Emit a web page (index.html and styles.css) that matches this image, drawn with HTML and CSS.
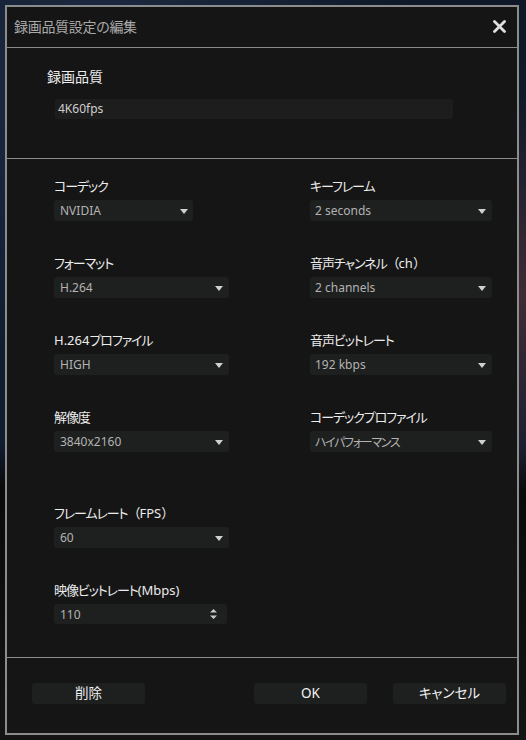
FILE: index.html
```html
<!DOCTYPE html>
<html lang="ja">
<head>
<meta charset="utf-8">
<title>録画品質設定の編集</title>
<link rel="stylesheet" href="styles.css">
</head>
<body>
<div class="dialog">
  <div class="titlebar">
    <span class="title">録画品質設定の編集</span>
    <svg class="close" width="13" height="13" viewBox="0 0 13 13"><path d="M1.5 1.5 L11.5 11.5 M11.5 1.5 L1.5 11.5" stroke="#e0e0e0" stroke-width="2.8" stroke-linecap="round"/></svg>
  </div>
  <div class="section-name">
    <div class="label big">録画品質</div>
    <div class="textbox">4K60fps</div>
  </div>
  <div class="section-grid">
    <div class="field">
      <div class="label"><span class="jp">コーデック</span></div>
      <div class="select narrow"><span>NVIDIA</span><i class="arrow"></i></div>
    </div>
    <div class="field">
      <div class="label"><span class="jp">キーフレーム</span></div>
      <div class="select wide"><span>2 seconds</span><i class="arrow"></i></div>
    </div>
    <div class="field">
      <div class="label"><span class="jp">フォーマット</span></div>
      <div class="select"><span>H.264</span><i class="arrow"></i></div>
    </div>
    <div class="field">
      <div class="label"><span class="jp">音声チャンネル</span><span class="paren">（</span>ch<span class="paren">）</span></div>
      <div class="select wide"><span>2 channels</span><i class="arrow"></i></div>
    </div>
    <div class="field">
      <div class="label">H.264<span class="jp">プロファイル</span></div>
      <div class="select"><span>HIGH</span><i class="arrow"></i></div>
    </div>
    <div class="field">
      <div class="label"><span class="jp">音声ビットレート</span></div>
      <div class="select wide"><span>192 kbps</span><i class="arrow"></i></div>
    </div>
    <div class="field">
      <div class="label"><span class="jp">解像度</span></div>
      <div class="select"><span>3840x2160</span><i class="arrow"></i></div>
    </div>
    <div class="field">
      <div class="label"><span class="jp">コーデックプロファイル</span></div>
      <div class="select wide"><span class="jp">ハイパフォーマンス</span><i class="arrow"></i></div>
    </div>
    <div class="field pushed">
      <div class="label"><span class="jp">フレームレート</span><span class="paren">（</span>FPS<span class="paren">）</span></div>
      <div class="select"><span>60</span><i class="arrow"></i></div>
    </div>
    <div class="field pushed"></div>
    <div class="field">
      <div class="label"><span class="jp">映像ビットレート</span>(Mbps)</div>
      <div class="select spin"><span>110</span>
        <svg class="spinner" width="9" height="12" viewBox="0 0 9 12"><path d="M4.5 1 L8 4.5 L1 4.5 Z M1 7.5 L8 7.5 L4.5 11 Z" fill="#c8c8c8"/></svg>
      </div>
    </div>
  </div>
  <div class="footer">
    <div class="btn">削除</div>
    <div class="spacer"></div>
    <div class="btn">OK</div>
    <div class="btn">キャンセル</div>
  </div>
</div>
</body>
</html>
```

FILE: styles.css
```css
html, body {
  margin: 0;
  padding: 0;
}
body {
  width: 526px;
  height: 740px;
  overflow: hidden;
  background:
    radial-gradient(circle at 20% 10%, rgba(60,80,120,0.35), transparent 40%),
    radial-gradient(circle at 98% 40%, rgba(110,60,60,0.5), transparent 30%),
    linear-gradient(180deg, #0e1828 0%, #101c30 60%, #0a0a0a 66%, #141414 100%);
  font-family: "Noto Sans", "Noto Sans CJK JP", sans-serif;
  font-feature-settings: "palt";
  padding-top: 5px;
  padding-left: 5px;
  box-sizing: border-box;
}
.dialog {
  width: 514px;
  height: 730px;
  box-sizing: border-box;
  border: 2px solid #8c8c8c;
  background: #151515;
  display: flex;
  flex-direction: column;
}
.titlebar {
  height: 40px;
  border-bottom: 1px solid #8a8a8a;
  display: flex;
  align-items: center;
  justify-content: space-between;
  padding: 0 11px 0 7px;
  flex: none;
}
.title {
  color: #a9a9a9;
  font-size: 14px;
  letter-spacing: -0.3px;
  font-family: "Noto Sans CJK JP", sans-serif;
  margin-top: -2px;
}
.close {
  display: block;
  margin-top: -2px;
}
.section-name {
  height: 111px;
  box-sizing: border-box;
  border-bottom: 1px solid #8a8a8a;
  padding: 19px 0 0 40px;
  flex: none;
}
.label {
  color: #ececec;
  font-size: 13px;
  line-height: 20px;
  height: 20px;
  white-space: nowrap;
}
.label.big {
  font-size: 14px;
}
.jp {
  letter-spacing: -1.1px;
}
.paren {
  font-feature-settings: normal;
  letter-spacing: -1px;
}
.textbox {
  margin: 12px 0 0 8px;
  width: 398px;
  height: 20px;
  background: #1d1d1d;
  border-radius: 3px;
  color: #cfcfcf;
  font-size: 12px;
  line-height: 20px;
  padding-left: 3px;
  box-sizing: border-box;
}
.section-grid {
  height: 499px;
  box-sizing: border-box;
  border-bottom: 1px solid #8a8a8a;
  padding: 17px 0 0 47px;
  display: grid;
  grid-template-columns: 256px 182px;
  grid-template-rows: 45px 45px 45px 45px 64px 45px;
  row-gap: 32px;
  flex: none;
}
.field.pushed {
  margin-top: 19px;
}
.select {
  margin-top: 4px;
  width: 175px;
  height: 21px;
  background: #1e1f1f;
  border-radius: 3px;
  display: flex;
  align-items: center;
  justify-content: space-between;
  padding: 0 6px 0 6px;
  box-sizing: border-box;
  color: #b3b3b3;
  font-size: 12px;
  white-space: nowrap;
}
.select .jp {
  letter-spacing: -1.3px;
}
.select.narrow {
  width: 139px;
  padding-right: 5px;
}
.select.wide {
  width: 182px;
  padding-left: 5px;
  padding-right: 6px;
}
.select.spin {
  width: 173px;
  height: 20px;
  padding-right: 9px;
}
.arrow {
  display: block;
  width: 0;
  height: 0;
  border-left: 4.5px solid transparent;
  border-right: 4.5px solid transparent;
  border-top: 5px solid #d0d0d0;
  margin-top: 1px;
}
.spinner {
  display: block;
}
.footer {
  flex: 1;
  display: flex;
  align-items: flex-start;
  padding: 25px 11px 0 25px;
  gap: 26px;
}
.spacer {
  flex: 1;
  margin-left: -52px;
}
.btn {
  width: 113px;
  height: 21px;
  background: #1e1f1f;
  border-radius: 3px;
  color: #f2f2f2;
  font-size: 13.5px;
  line-height: 21px;
  text-align: center;
}
```
